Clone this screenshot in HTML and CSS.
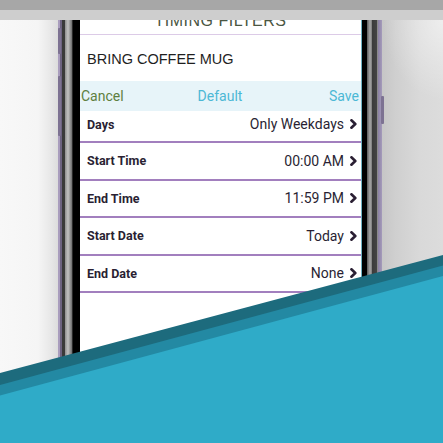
FILE: index.html
```html
<!DOCTYPE html>
<html>
<head>
<meta charset="utf-8">
<link rel="stylesheet" href="styles.css">
</head>
<body>
<div class="page">
  <div class="bar-dark"></div>
  <div class="bar-light"></div>
  <div class="stage">
    <div class="phone">
      <span class="btn btn-l1"></span>
      <span class="btn btn-l2"></span>
      <span class="btn btn-r1"></span>
      <div class="screen">
        <div class="title"><span>TIMING FILTERS</span></div>
        <div class="name">BRING COFFEE MUG</div>
        <div class="actions">
          <span class="cancel">Cancel</span>
          <span class="default">Default</span>
          <span class="save">Save</span>
        </div>
        <div class="row first">
          <span class="label">Days</span>
          <span class="value">Only Weekdays<svg class="chev" viewBox="0 0 7 10"><path d="M1.4 1.3 L5.3 5 L1.4 8.7"/></svg></span>
        </div>
        <div class="row">
          <span class="label">Start Time</span>
          <span class="value">00:00 AM<svg class="chev" viewBox="0 0 7 10"><path d="M1.4 1.3 L5.3 5 L1.4 8.7"/></svg></span>
        </div>
        <div class="row">
          <span class="label">End Time</span>
          <span class="value">11:59 PM<svg class="chev" viewBox="0 0 7 10"><path d="M1.4 1.3 L5.3 5 L1.4 8.7"/></svg></span>
        </div>
        <div class="row">
          <span class="label">Start Date</span>
          <span class="value">Today<svg class="chev" viewBox="0 0 7 10"><path d="M1.4 1.3 L5.3 5 L1.4 8.7"/></svg></span>
        </div>
        <div class="row">
          <span class="label">End Date</span>
          <span class="value">None<svg class="chev" viewBox="0 0 7 10"><path d="M1.4 1.3 L5.3 5 L1.4 8.7"/></svg></span>
        </div>
      </div>
    </div>
  </div>
  <svg class="band" viewBox="0 0 443 443" preserveAspectRatio="none">
    <polygon points="0,373 443,255 443,443 0,443" fill="#1d6b7d"/>
    <polygon points="0,385 443,265.5 443,443 0,443" fill="#2389a3"/>
    <polygon points="0,395.5 443,276 443,443 0,443" fill="#2fabc8"/>
  </svg>
</div>
</body>
</html>
```

FILE: styles.css
```css
* { box-sizing: border-box; }
html, body { margin: 0; padding: 0; }
body { width: 443px; height: 443px; overflow: hidden; background: #f7f7f7; }

.page {
  position: relative;
  width: 443px;
  height: 443px;
  overflow: hidden;
  display: flex;
  flex-direction: column;
  font-family: Roboto, "Liberation Sans", sans-serif;
}

.bar-dark { height: 10px; background: #a7a7a7; flex: none; }
.bar-light { height: 10px; background: #cecece; flex: none; }

.stage {
  flex: 1;
  display: flex;
  padding-left: 58px;
  overflow: hidden;
  background:
    radial-gradient(ellipse 60px 80px at 443px 0px, rgba(255,255,255,0.5), rgba(255,255,255,0)),
    linear-gradient(to right, #f8f8f8 0px, #f5f5f5 38px, #e6e6e6 52px, #dcdcdc 58px, #c6c6c6 382px, #cfcfcf 395px, #d9d9d9 420px, #dcdcdc 443px);
}

.phone {
  position: relative;
  width: 324px;
  height: 460px;
  flex: none;
  padding: 0 21px 0 22px;
  background: linear-gradient(to right,
    #a99dbd 0px, #a99dbd 2px,
    #6c6280 2px, #6c6280 4px,
    #3a3a3a 4px, #3a3a3a 7px,
    #8e8e8e 7px, #c2c2c2 10px, #6e6e6e 14px,
    #2a2a2a 14px, #2a2a2a 15px,
    #000 15px, #000 22px,
    #fff 22px, #fff 303px,
    #6fb3c3 303px, #6fb3c3 304px,
    #000 304px, #000 309px,
    #5a5a5a 309px, #a8a8a8 312px, #7a7a7a 314px,
    #3a3a3a 314px, #444 319px,
    #8a8a8a 319px, #8a8a8a 320px,
    #8a80a2 320px, #a59bbb 324px);
}

.btn { position: absolute; width: 3px; background: #7d7292; border-radius: 1px; }
.btn-l1 { left: 0; top: 8px; height: 26px; }
.btn-l2 { left: 0; top: 56px; height: 60px; }
.btn-r1 { right: -2px; top: 76px; height: 28px; }

.screen {
  background: #fff;
  height: 100%;
  display: flex;
  flex-direction: column;
}

.title {
  height: 15px;
  overflow: hidden;
  border-bottom: 1.5px solid #dccbe7;
  text-align: center;
  flex: none;
}
.title span {
  display: block;
  font-family: "Liberation Sans", sans-serif;
  font-size: 16px;
  line-height: 20px;
  margin-top: -9px;
  letter-spacing: 0.5px;
  color: #4a5642;
}

.name {
  height: 46px;
  display: flex;
  align-items: center;
  padding: 1px 0 0 7px;
  font-family: "Liberation Sans", sans-serif;
  font-size: 14.5px;
  color: #1f1f1f;
  flex: none;
}

.actions {
  height: 30px;
  background: #e7f4f9;
  display: grid;
  grid-template-columns: 1fr auto 1fr;
  align-items: center;
  padding: 0 2px 0 1px;
  font-size: 14px;
  flex: none;
}
.cancel { color: #5e7f3f; }
.default { color: #4cb8d5; }
.save { color: #4cb8d5; justify-self: end; }

.row {
  height: 37.5px;
  flex: none;
  display: flex;
  align-items: center;
  justify-content: space-between;
  padding: 0 4px 0 7px;
  border-bottom: 2px solid #a27fbe;
  color: #2a1f33;
}
.row.first { height: 32px; padding-bottom: 4px; }

.label { font-weight: 700; font-size: 12.5px; }
.value { font-size: 14px; display: flex; align-items: center; }
.chev { width: 7px; height: 10px; margin-left: 6px; }
.chev path { fill: none; stroke: #2a1f33; stroke-width: 2.6; stroke-linecap: round; stroke-linejoin: round; }

.band {
  position: absolute;
  left: 0;
  top: 0;
  width: 443px;
  height: 443px;
  pointer-events: none;
}
```
